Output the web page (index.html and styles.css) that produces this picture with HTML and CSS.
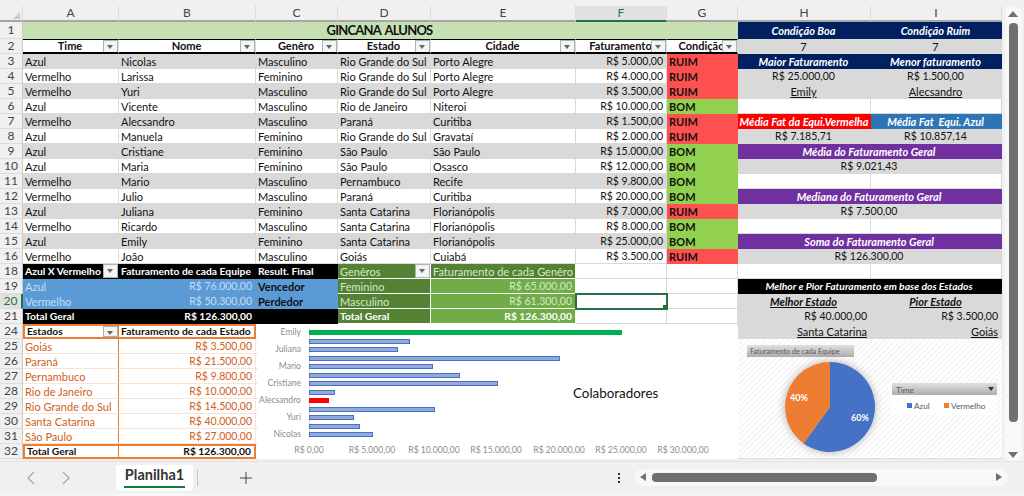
FILE: index.html
```html
<!DOCTYPE html>
<html>
<head>
  <meta charset="utf-8">
  <title>Planilha1</title>
  <link rel="stylesheet" href="styles.css">
</head>
<body>
<div class="app">
  <div class="work">
    <div class="sheet">
      <table class="grid">
        <colgroup>
          <col class="w-rh"><col class="w-a"><col class="w-b"><col class="w-c"><col class="w-d"><col class="w-e"><col class="w-f"><col class="w-g"><col class="w-h"><col class="w-i">
        </colgroup>
        <thead>
          <tr>
            <th class="corner"><span class="tri"></span></th>
            <th>A</th><th>B</th><th>C</th><th>D</th><th>E</th><th class="col-on">F</th><th>G</th><th>H</th><th>I</th>
          </tr>
        </thead>
        <tbody>
          <tr class="r1">
            <th>1</th>
            <td colspan="7" class="title">GINCANA ALUNOS</td>
            <td class="navy">Condição Boa</td><td class="navy">Condição Ruim</td>
          </tr>
          <tr>
            <th>2</th>
            <td class="hd">Time<i class="flt"></i></td>
            <td class="hd">Nome<i class="flt"></i></td>
            <td class="hd">Genêro<i class="flt"></i></td>
            <td class="hd">Estado<i class="flt"></i></td>
            <td class="hd">Cidade<i class="flt"></i></td>
            <td class="hd">Faturamento<i class="flt"></i></td>
            <td class="hd">Condição<i class="flt"></i></td>
            <td class="gray mid">7</td><td class="gray mid">7</td>
          </tr>
          <tr class="band">
            <th>3</th><td>Azul</td><td>Nicolas</td><td>Masculino</td><td>Rio Grande do Sul</td><td>Porto Alegre</td><td class="num">R$ 5.000,00</td><td class="ruim">RUIM</td>
            <td class="navy">Maior Faturamento</td><td class="navy">Menor faturamento</td>
          </tr>
          <tr>
            <th>4</th><td>Vermelho</td><td>Larissa</td><td>Feminino</td><td>Rio Grande do Sul</td><td>Porto Alegre</td><td class="num">R$ 4.000,00</td><td class="ruim">RUIM</td>
            <td class="gray mid val">R$ 25.000,00</td><td class="gray mid val">R$ 1.500,00</td>
          </tr>
          <tr class="band">
            <th>5</th><td>Vermelho</td><td>Yuri</td><td>Masculino</td><td>Rio Grande do Sul</td><td>Porto Alegre</td><td class="num">R$ 3.500,00</td><td class="ruim">RUIM</td>
            <td class="gray mid under">Emily</td><td class="gray mid under">Alecsandro</td>
          </tr>
          <tr>
            <th>6</th><td>Azul</td><td>Vicente</td><td>Masculino</td><td>Rio de Janeiro</td><td>Niteroi</td><td class="num">R$ 10.000,00</td><td class="bom">BOM</td>
            <td></td><td></td>
          </tr>
          <tr class="band">
            <th>7</th><td>Vermelho</td><td>Alecsandro</td><td>Masculino</td><td>Paraná</td><td>Curitiba</td><td class="num">R$ 1.500,00</td><td class="ruim">RUIM</td>
            <td class="red-head">Média Fat da Equi.Vermelha</td><td class="blue-head">Média Fat&nbsp; Equi. Azul</td>
          </tr>
          <tr>
            <th>8</th><td>Azul</td><td>Manuela</td><td>Feminino</td><td>Rio Grande do Sul</td><td>Gravataí</td><td class="num">R$ 2.000,00</td><td class="ruim">RUIM</td>
            <td class="gray mid val">R$ 7.185,71</td><td class="gray mid val">R$ 10.857,14</td>
          </tr>
          <tr class="band">
            <th>9</th><td>Azul</td><td>Cristiane</td><td>Feminino</td><td>São Paulo</td><td>São Paulo</td><td class="num">R$ 15.000,00</td><td class="bom">BOM</td>
            <td colspan="2" class="purple">Média do Faturamento Geral</td>
          </tr>
          <tr>
            <th>10</th><td>Azul</td><td>Maria</td><td>Feminino</td><td>São Paulo</td><td>Osasco</td><td class="num">R$ 12.000,00</td><td class="bom">BOM</td>
            <td colspan="2" class="gray mid val">R$ 9.021,43</td>
          </tr>
          <tr class="band">
            <th>11</th><td>Vermelho</td><td>Mario</td><td>Masculino</td><td>Pernambuco</td><td>Recife</td><td class="num">R$ 9.800,00</td><td class="bom">BOM</td>
            <td class="plain"></td><td class="plain"></td>
          </tr>
          <tr>
            <th>12</th><td>Vermelho</td><td>Julio</td><td>Masculino</td><td>Paraná</td><td>Curitiba</td><td class="num">R$ 20.000,00</td><td class="bom">BOM</td>
            <td colspan="2" class="purple">Mediana do Faturamento Geral</td>
          </tr>
          <tr class="band">
            <th>13</th><td>Azul</td><td>Juliana</td><td>Feminino</td><td>Santa Catarina</td><td>Florianópolis</td><td class="num">R$ 7.000,00</td><td class="ruim">RUIM</td>
            <td colspan="2" class="gray mid val">R$ 7.500,00</td>
          </tr>
          <tr>
            <th>14</th><td>Vermelho</td><td>Ricardo</td><td>Masculino</td><td>Santa Catarina</td><td>Florianópolis</td><td class="num">R$ 8.000,00</td><td class="bom">BOM</td>
            <td></td><td></td>
          </tr>
          <tr class="band">
            <th>15</th><td>Azul</td><td>Emily</td><td>Feminino</td><td>Santa Catarina</td><td>Florianópolis</td><td class="num">R$ 25.000,00</td><td class="bom">BOM</td>
            <td colspan="2" class="purple">Soma do Faturamento Geral</td>
          </tr>
          <tr>
            <th>16</th><td>Vermelho</td><td>João</td><td>Masculino</td><td>Goiás</td><td>Cuiabá</td><td class="num">R$ 3.500,00</td><td class="ruim">RUIM</td>
            <td colspan="2" class="gray mid val">R$ 126.300,00</td>
          </tr>
          <tr>
            <th>18</th>
            <td class="blk">Azul X Vermelho<i class="flt"></i></td><td class="blk">Faturamento de cada Equipe</td><td class="blk">Result. Final</td>
            <td class="grn-d soft">Genêros<i class="flt"></i></td><td class="grn-d soft">Faturamento de cada Genêro</td>
            <td></td><td></td><td></td><td></td>
          </tr>
          <tr>
            <th>19</th>
            <td class="sky">Azul</td><td class="sky num">R$ 76.000,00</td><td class="sky strong">Vencedor</td>
            <td class="grn-d soft">Feminino</td><td class="grn-l soft num">R$ 65.000,00</td>
            <td></td><td></td><td colspan="2" class="blk mid head-it">Melhor e Pior Faturamento em base dos Estados</td>
          </tr>
          <tr>
            <th class="row-on">20</th>
            <td class="sky">Vermelho</td><td class="sky num">R$ 50.300,00</td><td class="sky strong">Perdedor</td>
            <td class="grn-d soft">Masculino</td><td class="grn-l soft num">R$ 61.300,00</td>
            <td class="sel"><span class="handle"></span></td><td></td>
            <td class="gray mid under it-b">Melhor Estado</td><td class="gray mid under it-b">Pior Estado</td>
          </tr>
          <tr>
            <th>21</th>
            <td class="blk">Total Geral</td><td class="blk num">R$ 126.300,00</td><td class="blk"></td>
            <td class="grn-d b">Total Geral</td><td class="grn-l b num">R$ 126.300,00</td>
            <td></td><td></td>
            <td class="gray num">R$ 40.000,00</td><td class="gray num">R$ 3.500,00</td>
          </tr>
          <tr>
            <th>24</th>
            <td class="or-top or-l b">Estados<i class="flt"></i></td><td class="or-top or-r b">Faturamento de cada Estado</td>
            <td colspan="5"></td>
            <td class="gray txt-r under">Santa Catarina</td><td class="gray txt-r under">Goiás</td>
          </tr>
          <tr><th>25</th><td class="or or-a">Goiás</td><td class="or num">R$ 3.500,00</td><td colspan="7"></td></tr>
          <tr><th>26</th><td class="or or-a">Paraná</td><td class="or num">R$ 21.500,00</td><td colspan="7"></td></tr>
          <tr><th>27</th><td class="or or-a">Pernambuco</td><td class="or num">R$ 9.800,00</td><td colspan="7"></td></tr>
          <tr><th>28</th><td class="or or-a">Rio de Janeiro</td><td class="or num">R$ 10.000,00</td><td colspan="7"></td></tr>
          <tr><th>29</th><td class="or or-a">Rio Grande do Sul</td><td class="or num">R$ 14.500,00</td><td colspan="7"></td></tr>
          <tr><th>30</th><td class="or or-a">Santa Catarina</td><td class="or num">R$ 40.000,00</td><td colspan="7"></td></tr>
          <tr><th>31</th><td class="or or-a">São Paulo</td><td class="or num">R$ 27.000,00</td><td colspan="7"></td></tr>
          <tr>
            <th>32</th>
            <td class="or-top or-l or-a b">Total Geral</td><td class="or-top or-r b num">R$ 126.300,00</td>
            <td colspan="7"></td>
          </tr>
        </tbody>
      </table>

      <!-- charts float over the cells, like in the workbook -->
      <svg class="chart-bars" width="481" height="134" viewBox="0 0 481 134">
        <line class="axis" x1="52.5" y1="3" x2="52.5" y2="113"></line>
        <g class="bars">
          <rect class="top" x="52" y="5" width="313" height="5"></rect>
          <rect x="52.5" y="14.5" width="100" height="4"></rect>
          <rect x="52.5" y="22.5" width="88" height="4"></rect>
          <rect x="52.5" y="31.5" width="250" height="4"></rect>
          <rect x="52.5" y="39.5" width="123" height="4"></rect>
          <rect x="52.5" y="48.5" width="150" height="4"></rect>
          <rect x="52.5" y="56.5" width="188" height="4"></rect>
          <rect x="52.5" y="65.5" width="25" height="4"></rect>
          <rect class="low" x="52" y="73" width="20" height="5"></rect>
          <rect x="52.5" y="82.5" width="125" height="4"></rect>
          <rect x="52.5" y="90.5" width="44" height="4"></rect>
          <rect x="52.5" y="99.5" width="50" height="4"></rect>
          <rect x="52.5" y="107.5" width="63" height="4"></rect>
        </g>
        <g class="names">
          <text x="44" y="10">Emily</text>
          <text x="44" y="27">Juliana</text>
          <text x="44" y="44">Mario</text>
          <text x="44" y="61">Cristiane</text>
          <text x="44" y="78">Alecsandro</text>
          <text x="44" y="95">Yuri</text>
          <text x="44" y="112">Nicolas</text>
        </g>
        <g class="ticks">
          <text x="52" y="128">R$ 0,00</text>
          <text x="115" y="128">R$ 5.000,00</text>
          <text x="177" y="128">R$ 10.000,00</text>
          <text x="239" y="128">R$ 15.000,00</text>
          <text x="302" y="128">R$ 20.000,00</text>
          <text x="364" y="128">R$ 25.000,00</text>
          <text x="426" y="128">R$ 30.000,00</text>
        </g>
        <text class="chart-name" x="316" y="73">Colaboradores</text>
      </svg>

      <svg class="chart-pie" width="263" height="117" viewBox="0 0 263 117">
        <defs>
          <linearGradient id="fieldbtn" x1="0" y1="0" x2="0" y2="1">
            <stop offset="0" stop-color="#e0e0e0"></stop>
            <stop offset="1" stop-color="#adadad"></stop>
          </linearGradient>
          <filter id="soft" x="-30%" y="-30%" width="160%" height="160%">
            <feDropShadow dx="0" dy="0" stdDeviation="4" flood-color="#000" flood-opacity="0.3"></feDropShadow>
          </filter>
        </defs>
        <rect x="8" y="5" width="107" height="12" fill="url(#fieldbtn)"></rect>
        <text class="fld fld-sm" x="11" y="14">Faturamento de cada Equipe</text>
        <g filter="url(#soft)">
          <path fill="#4472c4" d="M91 67 L91 22 A45 45 0 1 1 64.55 103.4 Z"></path>
          <path fill="#ed7d31" d="M91 67 L64.55 103.4 A45 45 0 0 1 91 22 Z"></path>
        </g>
        <text class="pct" x="121" y="81">60%</text>
        <text class="pct" x="60" y="61">40%</text>
        <rect x="152" y="43" width="106" height="32" fill="#fff" opacity="0.8"></rect>
        <rect x="153" y="43" width="105" height="12" fill="url(#fieldbtn)"></rect>
        <text class="fld" x="157" y="53">Time</text>
        <path fill="#333" d="M249 47 h6 l-3 4 z"></path>
        <rect x="168" y="63" width="5" height="5" fill="#4472c4"></rect>
        <text class="fld" x="175" y="69">Azul</text>
        <rect x="205" y="63" width="5" height="5" fill="#ed7d31"></rect>
        <text class="fld" x="212" y="69">Vermelho</text>
      </svg>
    </div>

    <div class="vbar">
      <span class="arr-up"></span>
      <span class="vthumb"></span>
      <span class="arr-down"></span>
    </div>
  </div>

  <div class="tabs">
    <div class="nav">
      <svg width="50" height="14" viewBox="0 0 50 14"><path class="chev" d="M9 1 L3 7 L9 13"></path><path class="chev" d="M38 1 L44 7 L38 13"></path></svg>
    </div>
    <div class="tab"><span>Planilha1</span></div>
    <span class="sep"></span>
    <svg class="plus" width="12" height="12" viewBox="0 0 12 12"><path d="M6 0 V12 M0 6 H12"></path></svg>
    <span class="dots"><i></i><i></i><i></i></span>
    <div class="hbar">
      <span class="arr-left"></span>
      <span class="hthumb"></span>
      <span class="arr-right"></span>
    </div>
  </div>
  <div class="status"></div>
</div>
</body>
</html>
```

FILE: styles.css
```css
* {
  box-sizing: border-box;
}
html, body {
  margin: 0;
  height: 100%;
}
body {
  background: #f0f0f0;
  overflow: hidden;
  font-family: "Lato", "Noto Sans", sans-serif;
  font-size: 11px;
  color: #111;
}
.app {
  width: 1024px;
  height: 496px;
  display: flex;
  flex-direction: column;
}
.work {
  display: flex;
  height: 461px;
}

/* sheet */
.sheet {
  position: relative;
  width: 1002px;
  height: 461px;
  padding-top: 6px;
  overflow: hidden;
  flex: none;
}
.grid {
  table-layout: fixed;
  width: 1002px;
  border-collapse: separate;
  border-spacing: 0;
  background: #fff;
  font-size: 11px;
}
.w-rh { width: 23px; }
.w-a { width: 96px; }
.w-b { width: 137px; }
.w-c { width: 82px; }
.w-d { width: 93px; }
.w-e { width: 145px; }
.w-f { width: 91px; }
.w-g { width: 71px; }
.w-h { width: 133px; }
.w-i { width: 131px; }

.grid th {
  background: #f0f0f0;
  font-size: 12px;
  font-weight: normal;
  color: #444;
  height: 15px;
  padding: 0;
  line-height: 14px;
  border-right: 1px solid #c9c9c9;
  border-bottom: 1px solid #dcdcdc;
  text-align: center;
}
.grid thead th {
  height: 15px;
  border-bottom: 2px solid #a6a6a6;
  border-right: 1px solid #dcdcdc;
}
.grid .corner {
  position: relative;
}
.tri {
  position: absolute;
  right: 2px;
  bottom: 1px;
  border-style: solid;
  border-width: 0 0 7px 7px;
  border-color: transparent transparent #c8c8c8 transparent;
}
.grid thead .col-on {
  background: #e1e1e1;
  color: #217346;
  border-bottom-color: #217346;
}
.grid .row-on {
  background: #e1e1e1;
  color: #217346;
  border-right: 2px solid #217346;
}
.grid td {
  position: relative;
  height: 15px;
  padding: 1px 3px 0 2px;
  line-height: 13px;
  white-space: nowrap;
  overflow: hidden;
  border-right: 1px solid #d9d9d9;
  border-bottom: 1px solid #d9d9d9;
}
.r1 th, .r1 td {
  height: 17px;
}
.band td {
  background: #d9d9d9;
  border-color: #d9d9d9;
}
.band .plain {
  background: #fff;
}

.grid .title {
  background: #c6e0b4;
  text-align: center;
  font-size: 13px;
  letter-spacing: -0.8px;
  word-spacing: 2px;
  font-weight: bold;
  border-color: #c6e0b4;
}
.grid .hd {
  padding-top: 0;
  text-align: center;
  font-weight: bold;
  border-top: 1px solid #000;
  border-bottom: 2px solid #000;
  line-height: 12px;
}
.flt {
  position: absolute;
  right: 0;
  top: 0;
  width: 15px;
  height: 14px;
  background: #f4f4f4;
  border: 1px solid #aab2bd;
}
.flt::after {
  content: "";
  position: absolute;
  left: 3px;
  top: 4px;
  border-style: solid;
  border-width: 4px 3.5px 0 3.5px;
  border-color: #666 transparent transparent transparent;
}
.grid .num {
  text-align: right;
  font-size: 10.5px;
}
.mid {
  text-align: center;
}
.txt-r {
  text-align: right;
}
.val {
  font-size: 10.5px;
}
.grid .b {
  font-weight: bold;
  font-size: 10.3px;
}
.grid .ruim {
  background: #ff5050;
  border-color: #ff5050;
  font-weight: bold;
}
.grid .bom {
  background: #92d050;
  border-color: #92d050;
  font-weight: bold;
}

/* resumo a direita */
.grid .gray {
  background: #d9d9d9;
  border-color: #d9d9d9;
}
.grid .navy, .grid .red-head, .grid .blue-head, .grid .purple, .grid .head-it {
  color: #fff;
  font-weight: bold;
  font-style: italic;
  text-align: center;
  font-size: 11px;
}
.grid .navy {
  background: #002060;
  border-color: #002060;
}
.grid .red-head {
  background: #ff0000;
  border-color: #ff0000;
  padding: 1px 0 0;
}
.grid .blue-head {
  background: #2e75b6;
  border-color: #2e75b6;
}
.grid .purple {
  background: #7030a0;
  border-color: #7030a0;
}
.under {
  text-decoration: underline;
}
.it-b {
  font-weight: bold;
  font-style: italic;
}

/* tabelas dinamicas */
.grid .blk {
  background: #000;
  border-color: #000;
  color: #fff;
  font-weight: bold;
  font-size: 10.3px;
}
.grid .sky {
  background: #5b9bd5;
  border-color: #5b9bd5;
  color: #c5dcf2;
}
.grid .strong {
  color: #111;
  font-weight: bold;
}
.grid .grn-d {
  background: #548235;
  border-color: #fff;
  color: #fff;
}
.grid .grn-l {
  background: #70ad47;
  border-color: #fff;
  color: #fff;
}
.grid .soft {
  color: #d6e8c8;
  font-weight: normal;
}
.grid .sel {
  outline: 2px solid #217346;
  outline-offset: -1px;
  overflow: visible;
  z-index: 2;
}
.handle {
  position: absolute;
  right: -2px;
  bottom: -2px;
  width: 5px;
  height: 5px;
  background: #217346;
}

/* tabela laranja */
.grid .or {
  color: #d0601a;
  border-bottom-color: #fbe4d5;
  border-right-color: #fbe4d5;
}
.grid .or-a {
  border-right: 1px solid #ed7d31;
}
.grid .or-top {
  padding-top: 0;
  border-top: 2px solid #ed7d31;
  border-bottom: 2px solid #ed7d31;
  line-height: 11px;
}
.grid .or-l {
  border-left: 2px solid #ed7d31;
  border-right: 1px solid #ed7d31;
}
.grid .or-r {
  border-right: 2px solid #ed7d31;
}
.or-top .flt {
  top: 0;
  height: 11px;
}

/* graficos */
.chart-bars {
  position: absolute;
  left: 257px;
  top: 325px;
  background: #fff;
}
.axis {
  stroke: #d9d9d9;
}
.bars rect {
  fill: #94a9da;
  stroke: #4472c4;
}
.bars .top {
  fill: #00b050;
  stroke: none;
}
.bars .low {
  fill: #ff0000;
  stroke: none;
}
.names text {
  font-size: 8.6px;
  fill: #8c8c8c;
  text-anchor: end;
}
.ticks text {
  font-size: 8.6px;
  fill: #8c8c8c;
  text-anchor: middle;
}
.chart-name {
  font-size: 13.4px;
  fill: #111;
}
.chart-pie {
  position: absolute;
  left: 739px;
  top: 340px;
  background: repeating-linear-gradient(135deg, #fff 0, #fff 2px, #f6f6f6 2px, #f6f6f6 4px);
}
.fld {
  font-size: 8.2px;
  fill: #595959;
}
.fld-sm {
  font-size: 7.2px;
}
.pct {
  font-size: 9px;
  font-weight: bold;
  fill: #fff;
  text-anchor: middle;
}

/* barras de rolagem */
.vbar {
  position: relative;
  width: 22px;
  height: 461px;
  background: #f0f0f0;
}
.vbar::before {
  content: "";
  position: absolute;
  left: 3px;
  right: 2px;
  top: 6px;
  bottom: -2px;
  background: #f8f8f8;
  border-radius: 8px;
}
.vthumb {
  position: absolute;
  left: 7px;
  top: 23px;
  width: 9px;
  height: 399px;
  background: #707070;
  border-radius: 4px;
}
.arr-up, .arr-down {
  position: absolute;
  left: 6px;
  border-style: solid;
}
.arr-up {
  top: 11px;
  border-width: 0 5px 6px 5px;
  border-color: transparent transparent #707070 transparent;
}
.arr-down {
  top: 452px;
  border-width: 6px 5px 0 5px;
  border-color: #707070 transparent transparent transparent;
}

/* abas */
.tabs {
  position: relative;
  display: flex;
  align-items: center;
  height: 32px;
  background: #f0f0f0;
  border-top: 1px solid #e4e4e4;
}
.nav {
  width: 116px;
  padding-left: 25px;
  display: flex;
  align-items: center;
  flex: none;
}
.chev {
  fill: none;
  stroke: #a8a8a8;
  stroke-width: 1.3;
}
.tab {
  width: 77px;
  height: 26px;
  background: #fff;
  border-radius: 0 0 4px 4px;
  text-align: center;
  flex: none;
}
.tab span {
  display: inline-block;
  height: 23px;
  padding: 0 1px;
  line-height: 20px;
  font-size: 14.5px;
  font-weight: bold;
  color: #333;
  border-bottom: 2px solid #107c41;
}
.sep {
  width: 1px;
  height: 17px;
  margin-left: 4px;
  background: #c4c4c4;
  flex: none;
}
.plus {
  margin-left: 42px;
  flex: none;
}
.plus path {
  stroke: #444;
  stroke-width: 1;
  fill: none;
}
.dots {
  display: flex;
  flex-direction: column;
  gap: 2px;
  margin-left: 366px;
  flex: none;
}
.dots i {
  width: 2px;
  height: 2px;
  background: #333;
}
.hbar {
  position: relative;
  width: 372px;
  height: 17px;
  margin-left: 15px;
  background: #f8f8f8;
  border-radius: 8px;
  flex: none;
}
.hthumb {
  position: absolute;
  left: 17px;
  top: 4px;
  width: 225px;
  height: 9px;
  background: #707070;
  border-radius: 4px;
}
.arr-left, .arr-right {
  position: absolute;
  top: 4px;
  border-style: solid;
}
.arr-left {
  left: 5px;
  border-width: 4.5px 6px 4.5px 0;
  border-color: transparent #707070 transparent transparent;
}
.arr-right {
  right: 5px;
  border-width: 4.5px 0 4.5px 6px;
  border-color: transparent transparent transparent #707070;
}
.status {
  flex: 1;
  background: #f6f6f6;
}
```
